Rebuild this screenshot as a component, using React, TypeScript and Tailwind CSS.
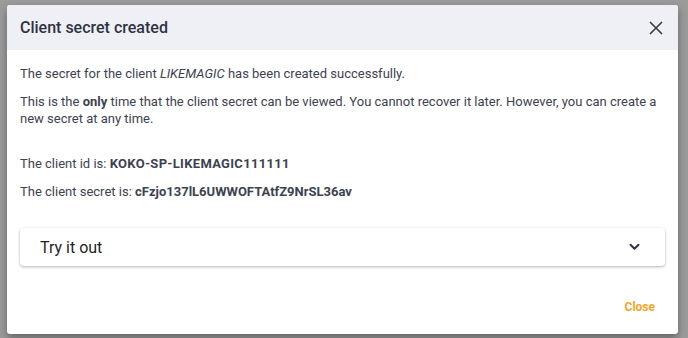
import React from "react";

export default function App() {
  return (
    <div className="w-[688px] h-[338px] bg-[#9b9b9b] pl-[7px] pt-[5px] overflow-hidden" style={{ fontFamily: "Roboto, 'Liberation Sans', sans-serif" }}>
      <div className="w-[671px] h-[329px] bg-white rounded-[3px] shadow-[0_4px_8px_rgba(0,0,0,0.35)] flex flex-col overflow-hidden">
        <div className="h-[45px] bg-[#eef0f6] flex items-center justify-between pl-[13px] pr-[15px] shrink-0">
          <h2 className="text-[16px] font-medium text-[#2e3243]">Client secret created</h2>
          <svg width="14" height="14" viewBox="0 0 14 14">
            <path d="M1.5 1.5 L12.5 12.5 M12.5 1.5 L1.5 12.5" stroke="#3b3f4c" strokeWidth="1.7" strokeLinecap="round" />
          </svg>
        </div>
        <div className="px-[13px] pt-[15px] text-[13px] leading-[17px] text-[#3d4250] flex flex-col">
          <p>
            The secret for the client <i>LIKEMAGIC</i> has been created successfully.
          </p>
          <p className="mt-[11px]">
            This is the <b className="font-bold">only</b> time that the client secret can be viewed. You cannot recover it later. However, you can create a new secret at any time.
          </p>
          <p className="mt-[28px]">
            The client id is: <b className="font-bold tracking-[0.3px]">KOKO-SP-LIKEMAGIC111111</b>
          </p>
          <p className="mt-[11px]">
            The client secret is: <b className="font-bold">cFzjo137lL6UWWOFTAtfZ9NrSL36av</b>
          </p>
          <div className="mt-[28px] h-[38px] rounded-[4px] bg-white shadow-[0_1px_3px_rgba(0,0,0,0.3)] flex items-center justify-between pl-[20px] pr-[25px]">
            <span className="text-[16px] text-[#1f1f1f]">Try it out</span>
            <svg width="11" height="8" viewBox="0 0 11 8">
              <path d="M1.5 1.8 L5.5 5.8 L9.5 1.8" stroke="#2e3243" strokeWidth="2" fill="none" strokeLinecap="round" strokeLinejoin="round" />
            </svg>
          </div>
          <div className="flex justify-end mt-[33px] pr-[10px]">
            <span className="text-[12px] font-bold text-[#f5a623]">Close</span>
          </div>
        </div>
      </div>
    </div>
  );
}
